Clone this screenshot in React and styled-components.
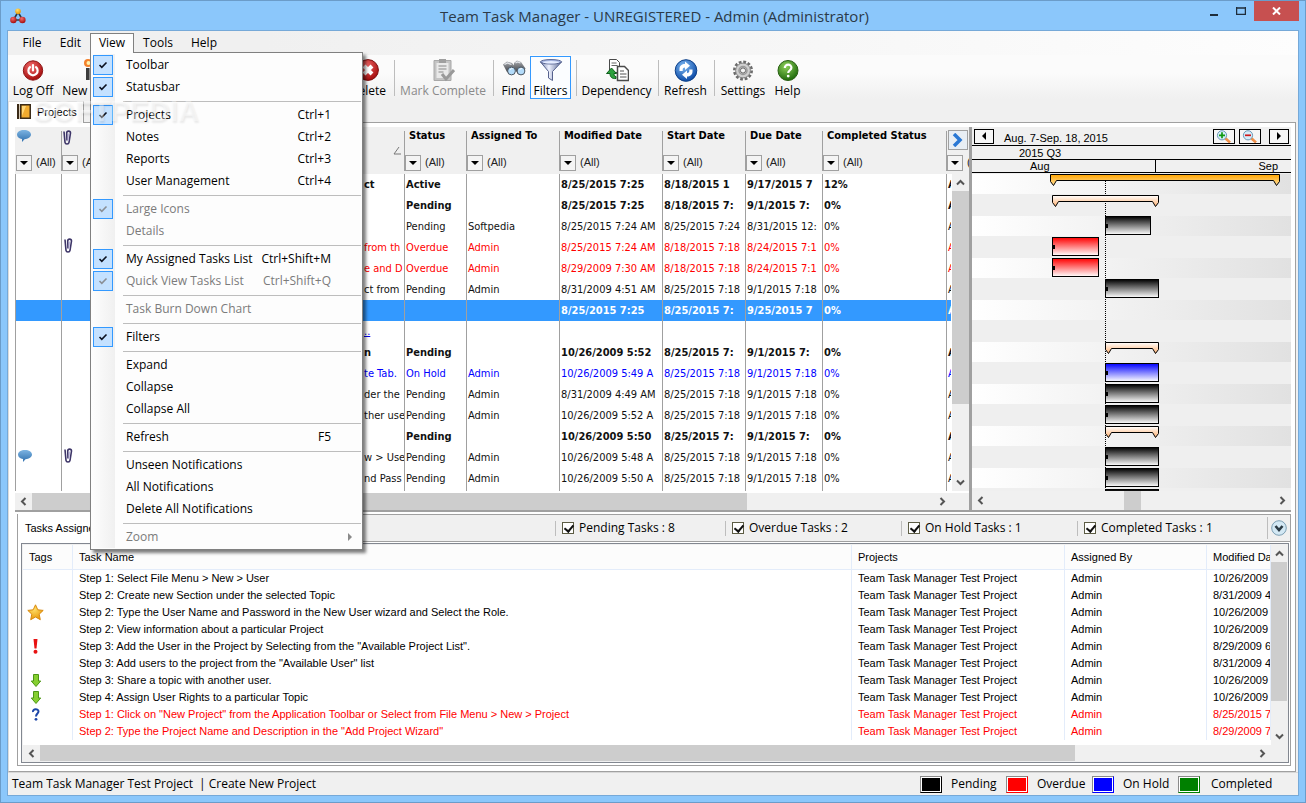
import React from "react";
import styled, { createGlobalStyle, css } from "styled-components";

const ui = `"Open Sans", "Noto Sans", sans-serif`;
const gridFont = `"DejaVu Sans Condensed", "Open Sans", sans-serif`;
const listFont = `"Liberation Sans", Arial, sans-serif`;

const GlobalStyle = createGlobalStyle`
  * { box-sizing: border-box; }
  body { margin: 0; background: #8bc7fb; }
  button, select, input { font: inherit; color: inherit; margin: 0; padding: 0; }
  button { cursor: pointer; }
`;

/* ---------- window frame ---------- */

const Window = styled.div`
  min-height: 100vh;
  display: flex;
  flex-direction: column;
  padding: 0 6px 6px;
  border: 1px solid #6b9cc9;
  background: #8bc7fb;
  font-family: ${ui};
  font-size: 12px;
  line-height: 16px;
  color: #000;
`;

const TitleBar = styled.header`
  height: 29px;
  display: grid;
  grid-template-columns: 1fr auto 1fr;
  align-items: center;
  padding-left: 3px;
  svg { display: block; }
`;

const Title = styled.h1`
  margin: 0;
  font-size: 15px;
  line-height: 20px;
  font-weight: 400;
  color: #2b3a48;
  white-space: nowrap;
`;

const Controls = styled.div`
  display: flex;
  align-self: start;
  justify-content: flex-end;
`;

const ControlButton = styled.button`
  width: ${(p) => (p.$close ? 45 : 27)}px;
  height: 20px;
  border: 0;
  display: flex;
  align-items: center;
  justify-content: center;
  background: ${(p) => (p.$close ? "#c75050" : "transparent")};
`;

const Client = styled.div`
  flex: 1;
  display: flex;
  flex-direction: column;
  border: 1px solid #76a9d8;
  background: #f0f0f0;
  position: relative;
`;

/* ---------- menu bar and menu ---------- */

const MenuBar = styled.nav`
  height: 24px;
  display: flex;
  padding: 2px 5px 0;
  background: linear-gradient(90deg, #f0f0f0 20%, #fdfdfd);
`;

const MenuSlot = styled.div`
  position: relative;
  width: ${(p) => p.$w}px;
`;

const MenuTitle = styled.button`
  width: 100%;
  height: 20px;
  padding-bottom: 1px;
  border: 1px solid ${(p) => (p.$open ? "#808080" : "transparent")};
  border-bottom: 0;
  background: ${(p) => (p.$open ? "#fdfdfd" : "transparent")};
  position: relative;
  z-index: ${(p) => (p.$open ? 3 : 0)};
`;

const Menu = styled.div`
  position: absolute;
  left: 0;
  top: 19px;
  z-index: 2;
  width: 273px;
  padding: 1px;
  border: 1px solid #808080;
  background: linear-gradient(90deg, #fdfdfd, #f0f0f0) 1px 1px / 23px calc(100% - 2px) no-repeat #fdfdfd;
  box-shadow: 3px 3px 3px rgba(0, 0, 0, 0.5);
`;

const MenuItem = styled.button`
  width: 100%;
  height: 22px;
  display: flex;
  align-items: center;
  border: 0;
  padding: 0 30px 0 1px;
  background: none;
  color: ${(p) => (p.$off ? "#7b7b7b" : "#000")};
  position: relative;
`;

const CheckBox = styled.span`
  width: 20px;
  height: 20px;
  margin-right: 13px;
  display: flex;
  align-items: center;
  justify-content: center;
  border: 1px solid ${(p) => (p.$on ? "#3399ff" : "transparent")};
  background: ${(p) => (p.$on ? "#c4e1ff" : "transparent")};
`;

const Shortcut = styled.span`
  margin-left: auto;
`;

const MenuRule = styled.hr`
  margin: 3px 0 2px 31px;
  border: 0;
  border-top: 1px solid #bdbdbd;
`;

const SubArrow = styled.span`
  position: absolute;
  right: 9px;
  border: 4px solid transparent;
  border-left-color: #8a8a8a;
  border-right: 0;
`;

/* ---------- tool bar ---------- */

const ToolBar = styled.div`
  height: 44px;
  display: flex;
  align-items: flex-end;
  padding-left: 1px;
  background: linear-gradient(#fbfbfb 40%, #f0f0f0);
`;

const ToolButton = styled.button`
  width: ${(p) => p.$w}px;
  height: 43px;
  flex: none;
  display: flex;
  flex-direction: column;
  align-items: center;
  justify-content: flex-end;
  border: 1px solid ${(p) => (p.$on ? "#3399ff" : "transparent")};
  background: ${(p) => (p.$on ? "#fbfdff" : "transparent")};
  color: ${(p) => (p.$off ? "#8a8a8a" : "#000")};
  line-height: 14px;
  white-space: nowrap;
  svg { display: block; margin-bottom: 2px; }
`;

const ToolRule = styled.span`
  flex: none;
  width: 1px;
  height: 36px;
  margin: 0 3px 3px 5px;
  background: #bdbdbd;
`;

const ToolGap = styled.span`
  flex: none;
  width: 212px;
`;

const TabStrip = styled.div`
  height: 23px;
  display: flex;
  align-items: flex-end;
  background: #f0f0f0;
`;

const Tab = styled.button`
  height: 22px;
  width: 76px;
  display: flex;
  align-items: center;
  gap: 6px;
  padding: 0 0 2px 8px;
  border: 1px solid #e0e0e0;
  border-bottom: 0;
  border-right-color: #a0a0a0;
  background: #fff;
  font: 11px/14px ${listFont};
  position: relative;
  top: 1px;
`;

const Watermark = styled.div`
  position: absolute;
  left: 25px;
  top: 64px;
  z-index: 4;
  pointer-events: none;
  font: 700 29px/32px ${listFont};
  color: rgba(255, 255, 255, 0.4);
  text-shadow: 1px 2px 2px rgba(0, 0, 0, 0.08);
`;

const Page = styled.main`
  flex: 1;
  display: flex;
  flex-direction: column;
  margin-right: 2px;
  padding: 4px 4px 5px 6px;
  border: 1px solid #a0a0a0;
  border-left-color: #dcdcdc;
  background: #fff;
`;

/* ---------- scroll bars ---------- */

const Bar = styled.div`
  display: flex;
  flex-direction: ${(p) => (p.$v ? "column" : "row")};
  ${(p) => (p.$v ? "width" : "height")}: ${(p) => p.$size}px;
  background: #f0f0f0;
`;

const BarButton = styled.button`
  flex: 0 0 17px;
  min-width: 0;
  border: 0;
  background: none;
  display: flex;
  align-items: center;
  justify-content: center;
`;

const Span = styled.span`
  flex: ${(p) => p.$n} 1 0;
  background: ${(p) => (p.$thumb ? "#cdcdcd" : "transparent")};
`;

const turn = { left: 0, up: 90, right: 180, down: 270 };
const Chevron = ({ dir }) => (
  <svg width="9" height="9" viewBox="0 0 9 9" aria-hidden="true">
    <path d="M6.5 1 3 4.5 6.5 8" fill="none" stroke="#555" strokeWidth="2" transform={`rotate(${turn[dir]} 4.5 4.5)`} />
  </svg>
);

function ScrollBar({ v, size = 17, before = 0, thumb, after }) {
  return (
    <Bar $v={v} $size={size}>
      <BarButton aria-label={v ? "Scroll up" : "Scroll left"}><Chevron dir={v ? "up" : "left"} /></BarButton>
      <Span $n={before} />
      <Span $n={thumb} $thumb />
      <Span $n={after} />
      <BarButton aria-label={v ? "Scroll down" : "Scroll right"}><Chevron dir={v ? "down" : "right"} /></BarButton>
    </Bar>
  );
}

/* ---------- task grid ---------- */

const Split = styled.div`
  display: flex;
  border-bottom: 2px solid #a0a0a0;
`;

const GridPane = styled.section`
  flex: 954 1 0;
  min-width: 0;
  background: #fff;
`;

const GridView = styled.div`
  position: relative;
  height: 364px;
  overflow: hidden;
  font-family: ${gridFont};
  font-size: 11px;
  line-height: 14px;
`;

const GridTable = styled.table`
  width: 100%;
  table-layout: fixed;
  border-collapse: separate;
  border-spacing: 0;
`;

const HeadCell = styled.th`
  height: 47px;
  padding: 0 0 2px;
  vertical-align: top;
  text-align: left;
  font-weight: 700;
  white-space: nowrap;
  overflow: hidden;
  background: linear-gradient(#a0a0a0, #a0a0a0) 0 4px / ${(p) => (p.$first ? 0 : 1)}px 40px no-repeat #f0f0f0;
`;

const HeadInner = styled.div`
  height: 45px;
  display: flex;
  flex-direction: column;
  justify-content: space-between;
  padding-left: 1px;
`;

const HeadTitle = styled.span`
  height: 18px;
  padding: 2px 0 0 ${(p) => (p.$icon ? 1 : 4)}px;
  svg { display: block; margin-top: 1px; }
`;

const Filter = styled.label`
  display: flex;
  align-items: flex-start;
  gap: 4px;
  height: 17px;
  font: 400 11px/14px ${listFont};
  color: #222;
`;

const FilterArrow = styled.span`
  flex: none;
  width: 16px;
  height: 16px;
  border: 1px solid #a0a0a0;
  background: #f4f4f4;
  display: flex;
  align-items: center;
  justify-content: center;
`;

const FilterSelect = styled.select`
  appearance: none;
  border: 0;
  background: none;
  width: 30px;
  height: 14px;
`;

const SortMark = styled.span`
  display: flex;
  justify-content: flex-end;
  padding: 0 3px 17px 0;
`;

const Row = styled.tr`
  height: 21px;
  font-weight: ${(p) => (p.$bold ? 700 : 400)};
  color: ${(p) => p.$tone || "#111"};
  background: ${(p) => (p.$sel ? "#3399ff" : "transparent")};
`;

const Cell = styled.td`
  height: 21px;
  padding: 0 0 0 ${(p) => (p.$tail ? 256 : 1)}px;
  border-left: 1px solid #a0a0a0;
  white-space: nowrap;
  overflow: hidden;
  svg { display: block; margin: 0 0 4px 1px; }
  a { color: #0000ee; }
`;

const SideBar = styled.div`
  position: absolute;
  right: 0;
  top: 47px;
  bottom: 0;
  display: flex;
  border-left: 1px solid #fff;
  background: #f0f0f0;
`;

const MoreButton = styled.button`
  position: absolute;
  right: 1px;
  top: 3px;
  width: 20px;
  height: 20px;
  border: 1px solid #a0a0a0;
  background: #e8eef4;
  display: flex;
  align-items: center;
  justify-content: center;
`;

const GridFoot = styled.div`
  padding: 2px 18px 0 0;
  background: linear-gradient(#fff 2px, #f0f0f0 2px);
`;

/* ---------- gantt ---------- */

const GanttPane = styled.section`
  flex: 319 1 0;
  min-width: 0;
  border-left: 3px solid #a0a0a0;
  background: #fff;
  font: 11px/12px ${listFont};
`;

const GanttBand = styled.div`
  height: ${(p) => p.$h}px;
  display: flex;
  align-items: center;
  border-bottom: 1px solid #000;
  background: #f0f0f0;
`;

const GanttNav = styled(GanttBand)`
  gap: 4px;
  padding: 0 2px;
`;

const GanttRange = styled.span`
  flex: 1;
  padding: 3px 0 0 6px;
`;

const SmallButton = styled.button`
  width: ${(p) => p.$w || 20}px;
  height: 15px;
  border: 1px solid #000;
  background: #f6f6f6;
  display: flex;
  align-items: center;
  justify-content: center;
  margin-left: ${(p) => (p.$apart ? 4 : 0)}px;
`;

const Period = styled.span`
  flex: ${(p) => (p.$grow ? "1 1 0" : "0 0 183px")};
  height: 100%;
  display: flex;
  align-items: center;
  padding-left: ${(p) => p.$pad || 0}px;
  padding-right: ${(p) => (p.$end ? 13 : 0)}px;
  justify-content: ${(p) => (p.$end ? "flex-end" : "flex-start")};
  border-left: ${(p) => (p.$end ? "1px solid #000" : "0")};
`;

const Chart = styled.svg`
  display: block;
  width: 100%;
  height: 318px;
`;

/* ---------- assigned tasks ---------- */

const Lower = styled.section`
  flex: 1;
  display: flex;
  flex-direction: column;
  margin: 2px 0 0 2px;
  border: 1px solid #a0a0a0;
  background: #fff;
`;

const LowerBar = styled.div`
  height: 27px;
  display: flex;
  align-items: center;
  border-bottom: 1px solid #a0a0a0;
  background: #f0f0f0;
`;

const LowerTab = styled.h2`
  margin: 0;
  flex: 0 0 120px;
  height: 28px;
  padding: 6px 0 0 7px;
  background: #fff;
  font: 400 11px/16px ${listFont};
`;

const Spacer = styled.span`
  flex: 1;
`;

const Tally = styled.label`
  flex: 0 0 ${(p) => p.$w}px;
  height: 15px;
  display: flex;
  align-items: center;
  gap: 5px;
  padding-left: 6px;
  border-left: 1px solid #bdbdbd;
`;

const Tick = styled.input.attrs({ type: "checkbox" })`
  appearance: none;
  width: 12px;
  height: 12px;
  border: 1px solid #5c5c44;
  background: #fff;
  position: relative;
  &:checked::after {
    content: "";
    position: absolute;
    left: 3px;
    top: 0;
    width: 4px;
    height: 7px;
    border: solid #111;
    border-width: 0 2px 2px 0;
    transform: rotate(40deg);
  }
`;

const RoundButton = styled.button`
  flex: 0 0 23px;
  height: 22px;
  border: 0;
  border-left: 1px solid #bdbdbd;
  background: none;
  display: flex;
  align-items: center;
  justify-content: center;
`;

const ListBox = styled.div`
  flex: 1;
  display: grid;
  grid-template-columns: 1fr 16px;
  grid-template-rows: 1fr 16px;
  margin: 1px 1px 2px 3px;
  padding: 1px;
  border: 1px solid #828790;
  background: #f0f0f0;
`;

const ListView = styled.div`
  min-width: 0;
  overflow: hidden;
  background: #fff;
`;

const ListTable = styled.table`
  width: 100%;
  table-layout: fixed;
  border-collapse: separate;
  border-spacing: 0;
  font: 11px/13px ${listFont};
`;

const listCell = css`
  padding: 0 0 0 6px;
  text-align: left;
  font-weight: 400;
  white-space: nowrap;
  overflow: hidden;
  border-right: 1px solid #e3ecfa;
`;

const ListHead = styled.th`
  ${listCell}
  height: 25px;
  border-bottom: 1px solid #e3ecfa;
  background: #fcfcfc;
`;

const ListCell = styled.td`
  ${listCell}
  height: 17px;
  svg { display: block; margin: 0 auto 0 -2px; }
`;

const ListRow = styled.tr`
  height: 17px;
  color: ${(p) => (p.$late ? "#ff0000" : "#000")};
`;

/* ---------- status bar ---------- */

const StatusBar = styled.footer`
  height: 23px;
  display: flex;
  align-items: center;
  padding-left: 4px;
  border-top: 1px solid #d7d7d7;
  background: #f0f0f0;
`;

const Crumb = styled.span`
  margin-right: 6px;
`;

const Legend = styled.div`
  display: flex;
  margin-left: auto;
`;

const LegendItem = styled.span`
  width: ${(p) => (p.$last ? 120 : 86)}px;
  display: flex;
  align-items: center;
  gap: ${(p) => (p.$last ? 11 : 9)}px;
`;

const Swatch = styled.i`
  width: 22px;
  height: 17px;
  padding: 1px;
  border: 1px solid #8a8a8a;
  border-right-color: ${(p) => p.$c};
  border-bottom-color: ${(p) => p.$c};
  background: ${(p) => p.$c} content-box;
  box-shadow: inset 0 0 0 1px #fff;
`;

/* ---------- icons ---------- */

const Ico = ({ children, w = 24, h = 24, box = "0 0 24 24" }) => (
  <svg width={w} height={h} viewBox={box} aria-hidden="true">{children}</svg>
);

const Hidden = styled.svg`
  position: absolute;
`;

const Defs = () => (
  <Hidden width="0" height="0" aria-hidden="true">
    <defs>
      <radialGradient id="red" cx=".4" cy=".3" r=".7"><stop offset="0" stopColor="#f26a6a" /><stop offset="1" stopColor="#a50d0d" /></radialGradient>
      <radialGradient id="green" cx=".4" cy=".3" r=".7"><stop offset="0" stopColor="#8ed05a" /><stop offset="1" stopColor="#1f6b0c" /></radialGradient>
      <radialGradient id="blue" cx=".4" cy=".3" r=".7"><stop offset="0" stopColor="#7db8f2" /><stop offset="1" stopColor="#0d4ca8" /></radialGradient>
      <radialGradient id="gold" cx=".4" cy=".3" r=".7"><stop offset="0" stopColor="#ffe06a" /><stop offset="1" stopColor="#e89808" /></radialGradient>
      <linearGradient id="steel"><stop offset="0" stopColor="#7583ab" /><stop offset=".4" stopColor="#eef2ff" /><stop offset="1" stopColor="#5a6894" /></linearGradient>
      <linearGradient id="tube" x2="0" y2="1"><stop offset="0" stopColor="#a8abb0" /><stop offset="1" stopColor="#2e3034" /></linearGradient>
      <linearGradient id="bubble" x2="0" y2="1"><stop offset="0" stopColor="#7db4e2" /><stop offset="1" stopColor="#3070ae" /></linearGradient>
      <linearGradient id="barBlack" x2="0" y2="1"><stop offset="0" stopColor="#000" /><stop offset="1" stopColor="#fff" /></linearGradient>
      <linearGradient id="barRed" x2="0" y2="1"><stop offset="0" stopColor="#f00" /><stop offset="1" stopColor="#fff" /></linearGradient>
      <linearGradient id="barBlue" x2="0" y2="1"><stop offset="0" stopColor="#00f" /><stop offset="1" stopColor="#fff" /></linearGradient>
      <linearGradient id="sumPeach" x2="0" y2="1"><stop offset="0" stopColor="#fff" /><stop offset="1" stopColor="#ffb070" /></linearGradient>
      <linearGradient id="sumGold" x2="0" y2="1"><stop offset="0" stopColor="#ffa500" /><stop offset="1" stopColor="#ffe0a0" /></linearGradient>
      <linearGradient id="shade"><stop offset="0" stopColor="#fff" /><stop offset="1" stopColor="#e1e1e1" /></linearGradient>
    </defs>
  </Hidden>
);

const AppIcon = () => (
  <Ico w={16} h={16} box="0 0 16 16">
    <path d="M8 4 4 11M8 4l4 7M4 12h8" stroke="#303a44" strokeWidth="1.6" />
    <circle cx="8" cy="3.2" r="2.8" fill="url(#gold)" />
    <circle cx="3.4" cy="12" r="3.2" fill="url(#red)" />
    <circle cx="12.4" cy="12" r="3.2" fill="url(#red)" />
  </Ico>
);

const PowerIcon = () => (
  <Ico>
    <circle cx="12" cy="12.5" r="9.7" fill="url(#red)" stroke="#8d1616" />
    <path d="M9 9.2a4.6 4.6 0 1 0 6 0M12 7v5.500" fill="none" stroke="#fff" strokeWidth="2.2" strokeLinecap="round" />
  </Ico>
);

const TorchIcon = () => (
  <Ico>
    <circle cx="4" cy="5" r="4" fill="#f4802a" /><circle cx="4.500" cy="5" r="2" fill="#fff3b0" />
    <path d="M2 10h6v12H2z" fill="#3c3c3c" /><path d="M5 10h2v12H5z" fill="#8a8a8a" />
  </Ico>
);

const DeleteIcon = () => (
  <Ico>
    <circle cx="12" cy="12" r="10.4" fill="url(#red)" stroke="#7d0f0f" />
    <path d="m8 8 8 8m0-8-8 8" stroke="#fff" strokeWidth="4" />
  </Ico>
);

const ClipboardIcon = () => (
  <Ico>
    <path d="M3 2.500h17v20H3z" fill="#c4c4c4" stroke="#a8a8a8" />
    <path d="M5.500 5h12v15h-12z" fill="#e9e9e9" /><path d="M8 1h7v4H8z" fill="#9f9f9f" />
    <path d="M7.500 8h8M7.500 11h8M7.500 14h5" stroke="#a9a9a9" strokeWidth="1.500" />
    <path d="m11 16 4 5 8-9" fill="none" stroke="#999" strokeWidth="3" />
  </Ico>
);

const BinocularIcon = () => (
  <Ico>
    <path d="M1 6.500 5 3.500l5 1.500 5 6-6 5-4-2z" fill="url(#tube)" />
    <path d="M12 5l3-2.500 4 1.500 4.500 6.500-3 6-5-1-3.500-6z" fill="url(#tube)" />
    <path d="m2.500 6.500 3-1.500 4 1.500M13.500 5l2-1 3 1" stroke="#e4e6ea" strokeWidth="1.300" fill="none" />
    <circle cx="9.500" cy="13" r="3.900" fill="#b4dcfa" stroke="#4b5560" /><circle cx="19" cy="13" r="3.900" fill="#b4dcfa" stroke="#4b5560" />
    <path d="M8 12c.500-1 1.500-1.500 2.500-1.500M17.500 12c.500-1 1.500-1.500 2.500-1.500" stroke="#fff" fill="none" />
  </Ico>
);

const FunnelIcon = () => (
  <Ico>
    <path d="M1.500 4 9.500 13.500V20l4 2.500v-9L22.500 4z" fill="url(#steel)" stroke="#56628e" />
    <ellipse cx="12" cy="3.800" rx="10.500" ry="2.200" fill="#aebde8" stroke="#56628e" />
    <ellipse cx="12" cy="4.300" rx="8" ry="1.200" fill="#e6edff" />
  </Ico>
);

const DependIcon = () => (
  <Ico>
    <path d="M4.500 1.500h7l3 3v10h-10z" fill="#fff" stroke="#4a4a4a" /><path d="M6.500 5h5M6.500 7.500h6" stroke="#666" />
    <path d="M12.500 8.500h7l4 4v10h-11z" fill="#fff" stroke="#4a4a4a" strokeWidth="1.500" />
    <path d="M15 13h4M15 16h6.500M15 19h6.500" stroke="#555" strokeWidth="1.200" />
    <path d="M11 20.500c-4 .500-6-1.500-6-5H1.500L6.500 10l5 5.500H9c0 2 .500 3 2 3z" fill="#2da13e" stroke="#0f5f1c" />
  </Ico>
);

const RefreshIcon = () => (
  <Ico>
    <circle cx="12" cy="12.500" r="10.800" fill="url(#blue)" stroke="#0d4089" />
    <path d="M5.500 13V11C5.500 7.800 8 6 11 6V3.500L16 7.700 11 12V9.500C9.500 9.500 8.700 10.300 8.700 11.500V13zM18.500 11.500v2c0 3.200-2.500 5-5.500 5V21L8 16.800l5-4.300V15c1.500 0 2.300-.800 2.300-2V11.500z" fill="#fff" />
  </Ico>
);

const GearIcon = () => (
  <Ico>
    <circle cx="12" cy="12.500" r="8.500" fill="none" stroke="#6c6c6c" strokeWidth="3" strokeDasharray="2.700 1.750" />
    <circle cx="12" cy="12.500" r="7.400" fill="#d0d0d0" stroke="#858585" />
    <circle cx="12" cy="12.500" r="4" fill="none" stroke="#9a9a9a" strokeWidth="1.500" />
    <circle cx="12" cy="12.500" r="2.600" fill="#f5f5f5" stroke="#666" />
  </Ico>
);

const HelpIcon = () => (
  <Ico>
    <circle cx="12" cy="12.500" r="10" fill="url(#green)" stroke="#285f12" />
    <path d="M8.800 10c0-4.500 6.800-4.200 6.600-.2 0 2.400-3.200 2.500-3.200 5.200" fill="none" stroke="#fff" strokeWidth="2.200" />
    <circle cx="12.200" cy="18.100" r="1.400" fill="#fff" />
  </Ico>
);

const BookIcon = () => (
  <Ico w={14} h={15} box="0 0 14 15">
    <path d="M0 0h14v15H0z" fill="#3b2b18" /><path d="M2 0h1v15H2z" fill="#d9cdb8" />
    <path d="M4.500 1.500h8v12h-8z" fill="#f2ab2e" /><path d="M5 2h4L5 12z" fill="#ffd778" />
  </Ico>
);

const BubbleIcon = () => (
  <Ico w={14} h={12} box="0 0 14 12">
    <path d="M7 0c4 0 7 2 7 4.600S11 9 7.500 9.200L5 12V9C2 8.600 0 7 0 4.600 0 2 3 0 7 0z" fill="url(#bubble)" />
  </Ico>
);

const ClipIcon = () => (
  <Ico w={9} h={15} box="0 0 9 15">
    <path d="M1 1.500 2 12.500c.300 2 3.700 2 4 0L7.500 3C7.500.500 3.800.500 3.700 3L4 10.500" fill="none" stroke="#3d3568" strokeWidth="1.600" />
    <path d="M5.500 3.500 5 11" stroke="#b9b3dd" />
  </Ico>
);

const StarIcon = () => (
  <Ico w={17} h={17} box="0 0 17 17">
    <path d="m8.500.800 2.300 5 5.400.600-4 3.800 1.100 5.500-4.800-2.700-4.800 2.700 1.100-5.500-4-3.800 5.400-.600z" fill="url(#gold)" stroke="#d98a10" />
  </Ico>
);

const BangIcon = () => (
  <Ico w={17} h={15} box="0 0 17 15">
    <path d="M6.500 0h4L9.500 9.500h-2z" fill="#e81212" /><circle cx="8.500" cy="12.800" r="2" fill="#e81212" />
  </Ico>
);

const DownIcon = () => (
  <Ico w={17} h={13} box="0 0 17 13">
    <path d="M6.500.500h5v6.500h2.200L9 12.500 4.300 7h2.200z" fill="#86cf30" stroke="#4c9614" />
  </Ico>
);

const QueryIcon = () => (
  <Ico w={17} h={13} box="0 0 17 13">
    <path d="M6 4C5.500.500 11.500.300 11.500 3.500 11.500 5.500 9 5.500 9 8.500" fill="none" stroke="#1c46a8" strokeWidth="2" />
    <circle cx="9" cy="11.300" r="1.400" fill="#1c46a8" />
  </Ico>
);

const Lens = ({ plus }) => (
  <Ico w={16} h={13} box="0 0 16 13">
    <path d="m9 8 5 4.500" stroke="#f0904a" strokeWidth="2.600" />
    <circle cx="6" cy="5.300" r="4.600" fill="#d6ecfa" stroke="#6d9bb8" />
    <path d={plus ? "M3 5.300h6M6 2.300v6" : "M3 5.300h6"} stroke={plus ? "#129a12" : "#d01818"} strokeWidth="1.700" />
  </Ico>
);

const Triangle = ({ dir }) => (
  <svg width="8" height="8" viewBox="0 0 8 8" aria-hidden="true">
    <path d={{ down: "M0 2h8L4 6z", left: "M6 0v8L2 4z", right: "M2 0v8l4-4z" }[dir]} fill="#000" />
  </svg>
);

const TickMark = ({ off }) => (
  <svg width="10" height="9" viewBox="0 0 10 9" aria-hidden="true">
    <path d="M1.500 4 3.800 6.300 8.500 1.500" fill="none" stroke={off ? "#8a8f96" : "#0c1220"} strokeWidth="1.600" />
  </svg>
);

/* ---------- data ---------- */

const menu = [
  ["Toolbar", "", 1], ["Statusbar", "", 1], null,
  ["Projects", "Ctrl+1", 1], ["Notes", "Ctrl+2"], ["Reports", "Ctrl+3"], ["User Management", "Ctrl+4"], null,
  ["Large Icons", "", 1, 1], ["Details", "", 0, 1], null,
  ["My Assigned Tasks List", "Ctrl+Shift+M", 1], ["Quick View Tasks List", "Ctrl+Shift+Q", 1, 1], null,
  ["Task Burn Down Chart", "", 0, 1], null,
  ["Filters", "", 1], null,
  ["Expand"], ["Collapse"], ["Collapse All"], null,
  ["Refresh", "F5"], null,
  ["Unseen Notifications"], ["All Notifications"], ["Delete All Notifications"], null,
  ["Zoom", "", 0, 1, 1],
];

const columns = [
  { w: 46, icon: <BubbleIcon />, name: "Comments" },
  { w: 46, icon: <ClipIcon />, name: "Attachments" },
  { w: 297, sort: true, name: "Task" },
  { w: 62, title: "Status" },
  { w: 93, title: "Assigned To" },
  { w: 103, title: "Modified Date" },
  { w: 83, title: "Start Date" },
  { w: 77, title: "Due Date" },
  { w: 124, title: "Completed Status" },
  { name: "Actual" },
];

const red = "#ff0000";
const blue = "#0000ff";
const rows = [
  { bold: 1, v: ["ct", "Active", "", "8/25/2015 7:25", "8/18/2015 1", "9/17/2015 7", "12%"] },
  { bold: 1, v: ["", "Pending", "", "8/25/2015 7:25", "8/18/2015 7:", "9/1/2015 7:", "0%"] },
  { v: ["", "Pending", "Softpedia", "8/25/2015 7:24 AM", "8/25/2015 7:24", "8/31/2015 12:", "0%"] },
  { clip: 1, tone: red, v: ["from th", "Overdue", "Admin", "8/25/2015 7:24 AM", "8/18/2015 7:18", "8/24/2015 7:1", "0%"] },
  { tone: red, v: ["e and D", "Overdue", "Admin", "8/29/2009 7:30 AM", "8/18/2015 7:18", "8/24/2015 7:1", "0%"] },
  { v: ["ct from", "Pending", "Admin", "8/31/2009 4:51 AM", "8/25/2015 7:18", "9/1/2015 7:18", "0%"] },
  { bold: 1, sel: 1, tone: "#fff", v: ["", "", "", "8/25/2015 7:25", "8/25/2015 7:", "9/25/2015 7", "0%"] },
  { link: 1, v: [".."] },
  { bold: 1, v: ["n", "Pending", "", "10/26/2009 5:52", "8/25/2015 7:", "9/1/2015 7:", "0%"] },
  { tone: blue, v: ["te Tab.", "On Hold", "Admin", "10/26/2009 5:49 A", "8/25/2015 7:18", "9/1/2015 7:18", "0%"] },
  { v: ["der the", "Pending", "Admin", "8/31/2009 4:49 AM", "8/25/2015 7:18", "9/1/2015 7:18", "0%"] },
  { v: ["ther use", "Pending", "Admin", "10/26/2009 5:52 A", "8/25/2015 7:18", "9/1/2015 7:18", "0%"] },
  { bold: 1, v: ["", "Pending", "", "10/26/2009 5:50", "8/25/2015 7:", "9/1/2015 7:", "0%"] },
  { talk: 1, clip: 1, v: ["w > Use", "Pending", "Admin", "10/26/2009 5:48 A", "8/25/2015 7:18", "9/1/2015 7:18", "0%"] },
  { v: ["nd Pass", "Pending", "Admin", "10/26/2009 5:50 A", "8/25/2015 7:18", "9/1/2015 7:18", "0%"] },
  { v: [] },
];

/* [row, start, end, kind] along the time axis */
const bars = [
  [0, 78, 307, "sumGold"], [1, 80, 186, "sumPeach"], [2, 133, 178, "barBlack"],
  [3, 80, 126, "barRed"], [4, 80, 126, "barRed"], [5, 133, 186, "barBlack"],
  [8, 133, 186, "sumPeach"], [9, 133, 186, "barBlue"], [10, 133, 186, "barBlack"],
  [11, 133, 186, "barBlack"], [12, 133, 186, "sumPeach"], [13, 133, 186, "barBlack"],
  [14, 133, 186, "barBlack"], [15, 133, 186, "barBlack"],
];

const tasks = [
  ["", "Step 1: Select File Menu > New > User", "10/26/2009 5:48 AM"],
  ["", "Step 2: Create new Section under the selected Topic", "8/31/2009 4:51 AM"],
  ["star", "Step 2: Type the User Name and Password in the New User wizard and Select the Role.", "10/26/2009 5:50 AM"],
  ["", "Step 2: View information about a particular Project", "10/26/2009 5:52 AM"],
  ["bang", 'Step 3: Add the User in the Project by Selecting from the "Available Project List".', "8/29/2009 6:30 AM"],
  ["", 'Step 3: Add users to the project from the "Available User" list', "8/31/2009 4:49 AM"],
  ["down", "Step 3: Share a topic with another user.", "10/26/2009 5:52 AM"],
  ["down", "Step 4: Assign User Rights to a particular Topic", "10/26/2009 5:49 AM"],
  ["query", 'Step 1: Click on "New Project" from the Application Toolbar or Select from File Menu > New > Project', "8/25/2015 7:24 AM", 1],
  ["", 'Step 2: Type the Project Name and Description in the "Add Project Wizard"', "8/29/2009 7:30 AM", 1],
];
const tags = { star: <StarIcon />, bang: <BangIcon />, down: <DownIcon />, query: <QueryIcon /> };

/* ---------- sections ---------- */

function ViewMenu() {
  return (
    <Menu role="menu">
      {menu.map((m, i) =>
        m === null ? <MenuRule key={i} /> : (
          <MenuItem key={i} role="menuitem" $off={m[3]} aria-disabled={!!m[3]}>
            <CheckBox $on={m[2]}>{m[2] ? <TickMark off={m[3]} /> : null}</CheckBox>
            {m[0]}
            {m[1] ? <Shortcut>{m[1]}</Shortcut> : null}
            {m[4] ? <SubArrow /> : null}
          </MenuItem>
        )
      )}
    </Menu>
  );
}

function Tools() {
  return (
    <ToolBar>
      <ToolButton $w={48}><PowerIcon />Log Off</ToolButton>
      <ToolButton $w={78}><TorchIcon />New Project</ToolButton>
      <ToolGap />
      <ToolButton $w={42}><DeleteIcon />Delete</ToolButton>
      <ToolRule />
      <ToolButton $w={90} $off><ClipboardIcon />Mark Complete</ToolButton>
      <ToolRule />
      <ToolButton $w={33}><BinocularIcon />Find</ToolButton>
      <ToolButton $w={41} $on><FunnelIcon />Filters</ToolButton>
      <ToolRule />
      <ToolButton $w={73}><DependIcon />Dependency</ToolButton>
      <ToolRule />
      <ToolButton $w={47}><RefreshIcon />Refresh</ToolButton>
      <ToolRule />
      <ToolButton $w={50}><GearIcon />Settings</ToolButton>
      <ToolButton $w={39}><HelpIcon />Help</ToolButton>
    </ToolBar>
  );
}

function TaskGrid() {
  return (
    <GridPane>
      <GridView>
        <GridTable>
          <colgroup>{columns.map((c, i) => <col key={i} width={c.w} />)}</colgroup>
          <thead>
            <tr>
              {columns.map((c, i) => (
                <HeadCell key={i} $first={i === 0}>
                  <HeadInner>
                    <HeadTitle $icon={!!c.icon}>{c.title || c.icon}</HeadTitle>
                    {c.sort ? (
                      <SortMark><svg width="8" height="8" viewBox="0 0 8 8"><path d="M6 0 1 7h7" fill="none" stroke="#777" /></svg></SortMark>
                    ) : (
                      <Filter>
                        <FilterArrow><Triangle dir="down" /></FilterArrow>
                        <FilterSelect aria-label={`Filter ${c.title || c.name}`}><option>(All)</option></FilterSelect>
                      </Filter>
                    )}
                  </HeadInner>
                </HeadCell>
              ))}
            </tr>
          </thead>
          <tbody>
            {rows.map((r, i) => (
              <Row key={i} $bold={r.bold} $tone={r.tone} $sel={r.sel}>
                <Cell>{r.talk ? <BubbleIcon /> : null}</Cell>
                <Cell>{r.clip ? <ClipIcon /> : null}</Cell>
                <Cell $tail>{r.link ? <a href="#task">{r.v[0]}</a> : r.v[0]}</Cell>
                {[1, 2, 3, 4, 5, 6].map((k) => <Cell key={k}>{r.v[k]}</Cell>)}
                <Cell>{r.v[6] ? "A" : ""}</Cell>
              </Row>
            ))}
          </tbody>
        </GridTable>
        <MoreButton aria-label="More columns">
          <svg width="12" height="14" viewBox="0 0 12 14"><path d="m2 1 6 6-6 6" fill="none" stroke="#2a78d4" strokeWidth="3.500" /></svg>
        </MoreButton>
        <SideBar><ScrollBar v thumb={214} after={71} /></SideBar>
      </GridView>
      <GridFoot><ScrollBar thumb={715} after={187} /></GridFoot>
    </GridPane>
  );
}

function GanttBar({ row, x1, x2, kind }) {
  const y = row * 21 + 1;
  if (kind.startsWith("sum")) {
    const d = `M${x1 + 0.5} ${y + 0.5}H${x2 + 0.5}V${y + 7.5}L${x2 - 2.5} ${y + 11.5}L${x2 - 5.5} ${y + 6.5}H${x1 + 6.5}L${x1 + 3.5} ${y + 11.5}L${x1 + 0.5} ${y + 7.5}Z`;
    return <path d={d} fill={`url(#${kind})`} stroke="#000" />;
  }
  return (
    <g>
      <rect x={x1 + 0.5} y={y + 0.5} width={x2 - x1} height="18" fill={`url(#${kind})`} stroke="#000" />
      <rect x={x1} y={y + 8} width="3" height="4" />
    </g>
  );
}

function Gantt() {
  return (
    <GanttPane>
      <GanttNav $h={19}>
        <SmallButton aria-label="Earlier"><Triangle dir="left" /></SmallButton>
        <GanttRange>Aug. 7-Sep. 18, 2015</GanttRange>
        <SmallButton $w={22} aria-label="Zoom in"><Lens plus /></SmallButton>
        <SmallButton $w={22} aria-label="Zoom out"><Lens /></SmallButton>
        <SmallButton $apart aria-label="Later"><Triangle dir="right" /></SmallButton>
      </GanttNav>
      <GanttBand $h={14}><Period $grow $pad={47}>2015 Q3</Period></GanttBand>
      <GanttBand $h={13}><Period $pad={58}>Aug</Period><Period $grow $end>Sep</Period></GanttBand>
      <Chart role="img" aria-label="Task timeline">
        <rect width="100%" height="318" fill="#efefef" />
        {[0, 1, 2, 3, 4, 5, 6, 7].map((i) => <rect key={i} y={1 + i * 42} width="100%" height="20" fill="url(#shade)" />)}
        <path d="M133.500 8V318" stroke="#000" strokeDasharray="1 1" />
        {bars.map((b, i) => <GanttBar key={i} row={b[0]} x1={b[1]} x2={b[2]} kind={b[3]} />)}
      </Chart>
      <ScrollBar size={19} before={135} thumb={17} after={133} />
    </GanttPane>
  );
}

function AssignedTasks() {
  return (
    <Lower>
      <LowerBar>
        <LowerTab>Tasks Assigned</LowerTab>
        <Spacer />
        <Tally $w={170}><Tick defaultChecked />Pending Tasks : 8</Tally>
        <Tally $w={176}><Tick defaultChecked />Overdue Tasks : 2</Tally>
        <Tally $w={176}><Tick defaultChecked />On Hold Tasks : 1</Tally>
        <Tally $w={190}><Tick defaultChecked />Completed Tasks : 1</Tally>
        <RoundButton aria-label="Collapse panel">
          <svg width="16" height="16" viewBox="0 0 16 16">
            <circle cx="8" cy="8" r="7.300" fill="#d3e8f4" stroke="#7d9fb3" />
            <path d="m4.500 6 3.500 4L11.500 6" fill="none" stroke="#2c3b45" strokeWidth="2.600" />
          </svg>
        </RoundButton>
      </LowerBar>
      <ListBox>
        <ListView>
          <ListTable>
            <colgroup><col width="50" /><col /><col width="213" /><col width="142" /><col width="64" /></colgroup>
            <thead>
              <tr>
                <ListHead>Tags</ListHead><ListHead>Task Name</ListHead><ListHead>Projects</ListHead>
                <ListHead>Assigned By</ListHead><ListHead>Modified Date</ListHead>
              </tr>
            </thead>
            <tbody>
              {tasks.map((t, i) => (
                <ListRow key={i} $late={t[3]}>
                  <ListCell>{tags[t[0]]}</ListCell>
                  <ListCell>{t[1]}</ListCell>
                  <ListCell>Team Task Manager Test Project</ListCell>
                  <ListCell>Admin</ListCell>
                  <ListCell>{t[2]}</ListCell>
                </ListRow>
              ))}
            </tbody>
          </ListTable>
        </ListView>
        <ScrollBar v size={16} thumb={137} after={27} />
        <ScrollBar size={16} thumb={1035} after={179} />
      </ListBox>
    </Lower>
  );
}

export default function App() {
  return (
    <Window>
      <GlobalStyle />
      <Defs />
      <TitleBar>
        <AppIcon />
        <Title>Team Task Manager - UNREGISTERED - Admin (Administrator)</Title>
        <Controls>
          <ControlButton aria-label="Minimize"><svg width="8" height="10"><path d="M0 8h8v2H0z" fill="#1f2d3a" /></svg></ControlButton>
          <ControlButton aria-label="Maximize"><svg width="10" height="8"><path d="M.5 0v7.500h9V0M0 1h10" fill="none" stroke="#1f2d3a" strokeWidth="1.500" /></svg></ControlButton>
          <ControlButton $close aria-label="Close"><svg width="9" height="8"><path d="m1 .5 7 7m0-7-7 7" stroke="#fff" strokeWidth="2" /></svg></ControlButton>
        </Controls>
      </TitleBar>
      <Client>
        <MenuBar>
          <MenuSlot $w={38}><MenuTitle>File</MenuTitle></MenuSlot>
          <MenuSlot $w={39}><MenuTitle>Edit</MenuTitle></MenuSlot>
          <MenuSlot $w={44}><MenuTitle $open aria-expanded="true">View</MenuTitle><ViewMenu /></MenuSlot>
          <MenuSlot $w={48}><MenuTitle>Tools</MenuTitle></MenuSlot>
          <MenuSlot $w={44}><MenuTitle>Help</MenuTitle></MenuSlot>
        </MenuBar>
        <Tools />
        <TabStrip><Tab><BookIcon />Projects</Tab></TabStrip>
        <Watermark aria-hidden="true">SOFTPEDIA</Watermark>
        <Page>
          <Split>
            <TaskGrid />
            <Gantt />
          </Split>
          <AssignedTasks />
        </Page>
        <StatusBar>
          <Crumb>Team Task Manager Test Project</Crumb>
          <Crumb>| Create New Project</Crumb>
          <Legend>
            <LegendItem><Swatch $c="#000" />Pending</LegendItem>
            <LegendItem><Swatch $c="#f00" />Overdue</LegendItem>
            <LegendItem><Swatch $c="#00f" />On Hold</LegendItem>
            <LegendItem $last><Swatch $c="#008000" />Completed</LegendItem>
          </Legend>
        </StatusBar>
      </Client>
    </Window>
  );
}
